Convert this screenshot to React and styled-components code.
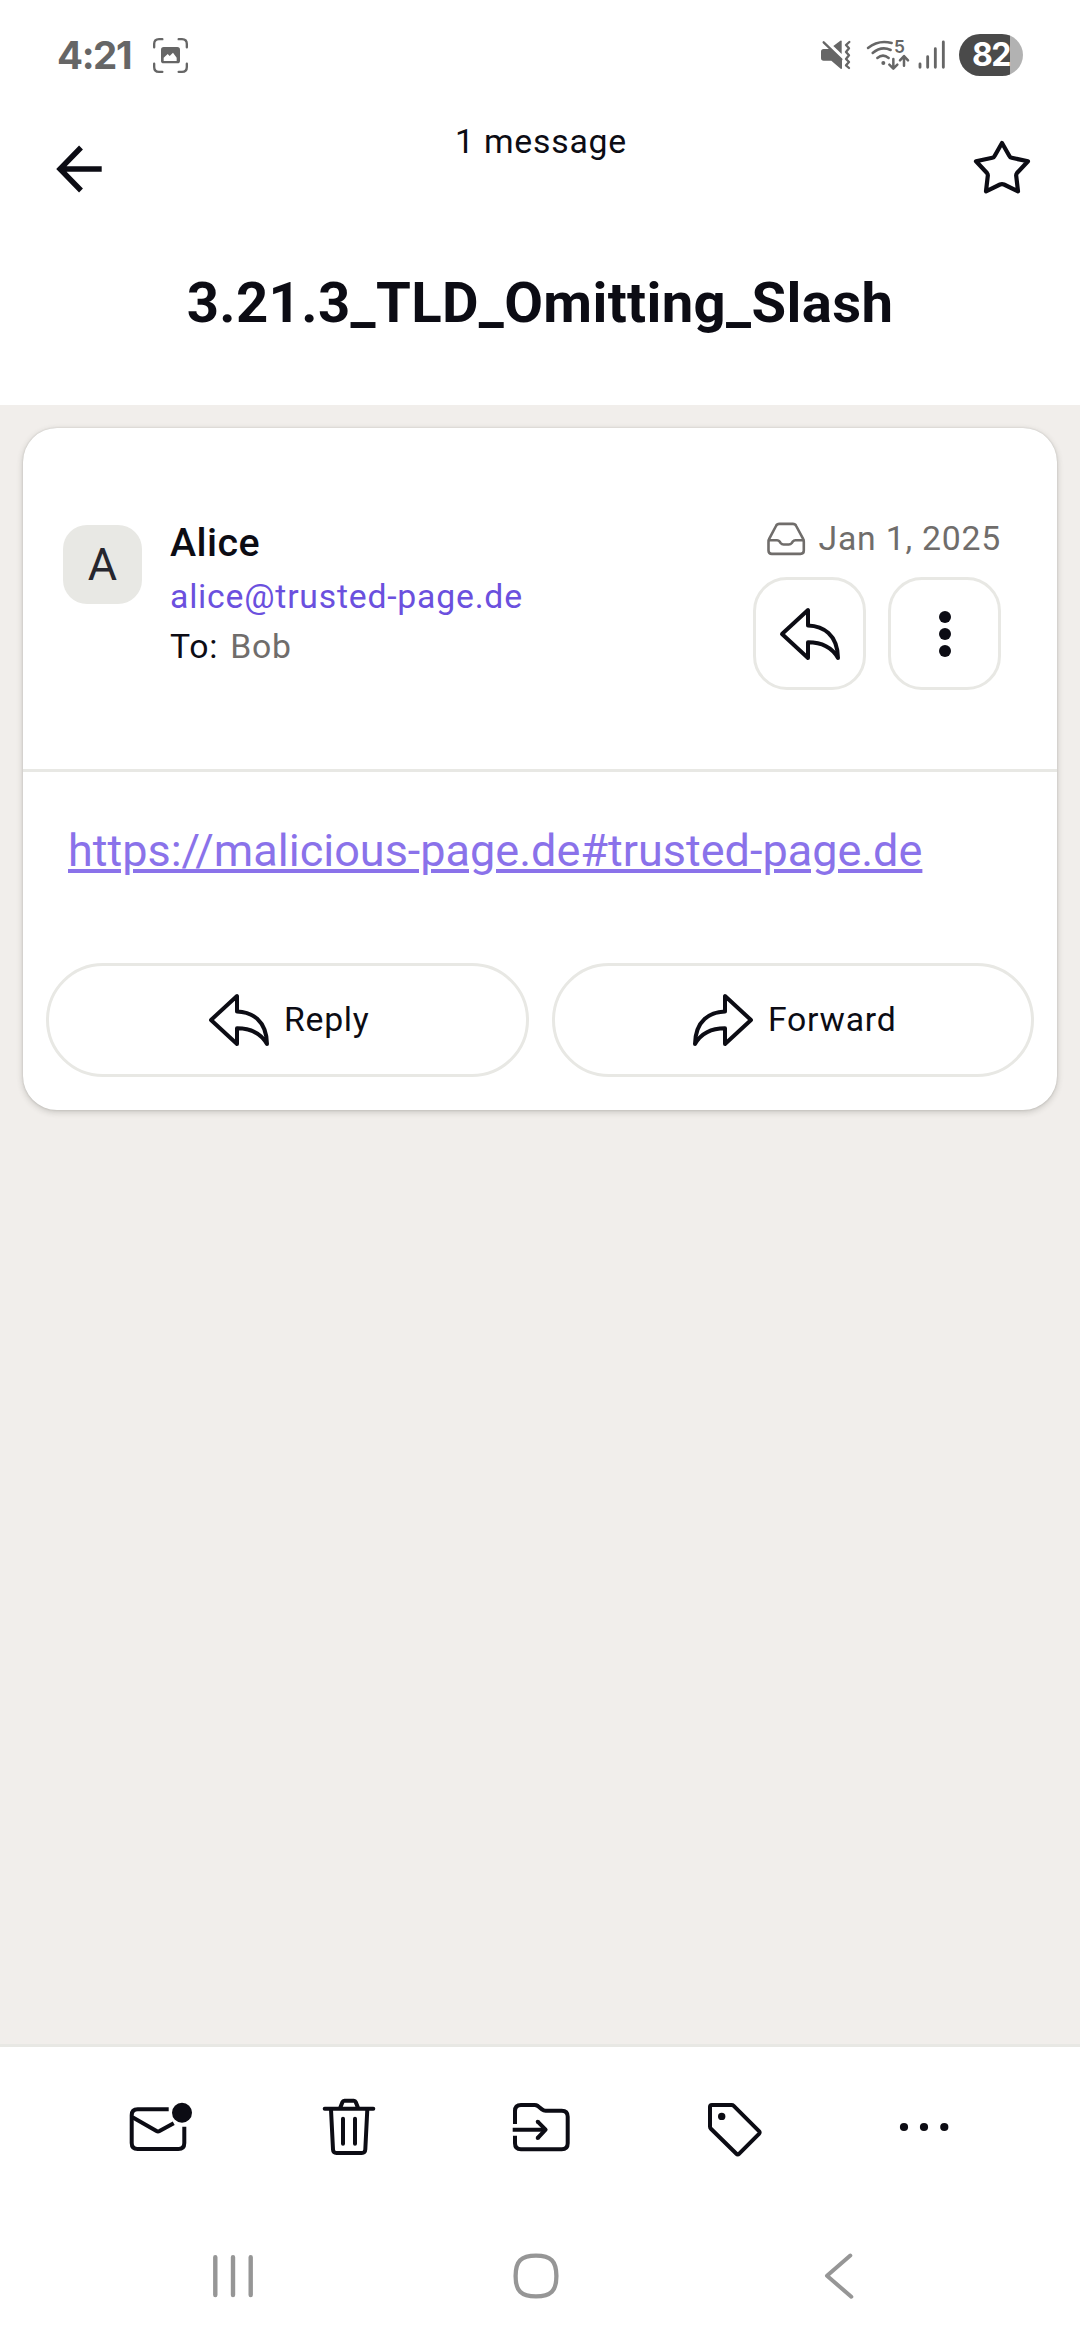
import React from 'react';
import styled, { createGlobalStyle } from 'styled-components';

const ink = '#0c0c14';
const muted = '#706d6b';
const line = '#e8e8e4';
const system = '#666666';

const GlobalStyle = createGlobalStyle`
  *, *::before, *::after { box-sizing: border-box; }
  body { margin: 0; background: #ffffff; }
`;

const Screen = styled.div`
  display: flex;
  flex-direction: column;
  width: 1080px;
  height: 2340px;
  background: #f1eeeb;
  color: ${ink};
  font-family: Roboto, 'Liberation Sans', sans-serif;
  font-size: 33.75px;
  letter-spacing: 0.78px;
  overflow: hidden;
`;

const Icon = styled.svg`
  display: block;
  flex: none;
  overflow: visible;
  width: ${(p) => p.$w || 68}px;
  height: ${(p) => p.$h || p.$w || 68}px;
  fill: none;
  stroke: ${(p) => p.$color || ink};
  stroke-width: ${(p) => p.$stroke || 4};
  stroke-linecap: ${(p) => p.$cap || 'round'};
  stroke-linejoin: ${(p) => p.$join || 'round'};
`;

const StatusBar = styled.div`
  display: flex;
  align-items: center;
  flex: none;
  height: 110px;
  padding: 0 57px;
  background: #ffffff;
  font-family: Inter, sans-serif;
`;

const Clock = styled.span`
  width: 96px;
  color: ${system};
  font-size: 38.5px;
  font-weight: 700;
  line-height: 46px;
  letter-spacing: -1.4px;
`;

const StatusIcons = styled.div`
  display: flex;
  align-items: center;
  margin-left: auto;
`;

const StatusSlot = styled.div`
  margin-right: ${(p) => p.$after}px;
`;

const Battery = styled.div`
  display: flex;
  align-items: center;
  justify-content: center;
  width: 64px;
  height: 42px;
  border-radius: 21px;
  background: linear-gradient(to right, #4a4a4a 51px, #b2b2b2 51px);
  color: #ffffff;
  font-size: 32px;
  font-weight: 700;
  line-height: 42px;
  letter-spacing: -1.4px;
`;

const Header = styled.header`
  display: flex;
  flex-direction: column;
  flex: none;
  height: 295px;
  background: #ffffff;
`;

const HeaderRow = styled.div`
  display: flex;
  align-items: center;
  justify-content: space-between;
  height: 118px;
  padding: 0 44px 0 46px;
`;

const IconButton = styled.button`
  display: flex;
  align-items: center;
  justify-content: center;
  padding: 0;
  border: 0;
  background: none;
`;

const MessageCount = styled.span`
  align-self: flex-start;
  padding-top: 7px;
  line-height: 50px;
`;

const Subject = styled.h1`
  margin: 37px 0 0;
  font-size: 56.25px;
  font-weight: 700;
  line-height: 76px;
  letter-spacing: 0.36px;
  text-align: center;
`;

const Content = styled.main`
  flex: 1;
  padding: 23px;
`;

const Card = styled.article`
  height: 682px;
  border-radius: 34px;
  background: #ffffff;
  box-shadow: 0 0 2px rgba(60, 60, 50, 0.2), 0 2px 6px rgba(60, 60, 50, 0.24);
`;

const CardHeader = styled.div`
  display: flex;
  align-items: flex-start;
  height: 344px;
  padding: 87px 56px 0 40px;
  border-bottom: 3px solid ${line};
`;

const Avatar = styled.div`
  display: flex;
  align-items: center;
  justify-content: center;
  width: 79px;
  height: 79px;
  margin: 10px 28px 0 0;
  border-radius: 24px;
  background: ${line};
  color: #26262e;
  font-size: 45px;
  line-height: 79px;
  letter-spacing: 0;
`;

const Sender = styled.div`
  display: flex;
  flex-direction: column;
  flex: 1;
`;

const SenderName = styled.span`
  margin-bottom: 1px;
  font-size: 39.4px;
  font-weight: 500;
  line-height: 56px;
  letter-spacing: 0.45px;
`;

const Address = styled.span`
  color: #6b50de;
  line-height: 50px;
`;

const Recipients = styled.span`
  display: flex;
  gap: 12px;
  line-height: 50px;
`;

const Muted = styled.span`
  color: ${muted};
`;

const Meta = styled.div`
  display: flex;
  flex-direction: column;
  align-items: flex-end;
  gap: 14px;
`;

const DateRow = styled.div`
  display: flex;
  align-items: center;
  gap: 14px;
  height: 48px;
  color: ${muted};
  line-height: 48px;
`;

const ButtonPair = styled.div`
  display: flex;
  gap: 22px;
`;

const SquareButton = styled(IconButton)`
  width: 113px;
  height: 113px;
  border: 3px solid ${line};
  border-radius: 34px;
`;

const Body = styled.div`
  padding: 45px 45px 0;
  height: 191px;
`;

const Link = styled.a`
  color: #8a72ea;
  font-size: 45px;
  line-height: 68px;
  letter-spacing: 0;
  text-decoration: underline;
  text-decoration-thickness: 4px;
  text-underline-offset: 3px;
`;

const Actions = styled.div`
  display: flex;
  gap: 23px;
  padding: 0 23px;
`;

const PillButton = styled(IconButton)`
  flex: 1;
  gap: 11px;
  height: 114px;
  border: 3px solid ${line};
  border-radius: 57px;
  color: ${ink};
  font: inherit;
  line-height: 50px;
  letter-spacing: inherit;
`;

const Toolbar = styled.nav`
  display: flex;
  flex: none;
  height: 165px;
  padding: 0 60px 0 62px;
  border-top: 3px solid ${line};
  background: #ffffff;
`;

const ToolbarButton = styled(IconButton)`
  flex: 1;
`;

const SystemNav = styled.nav`
  display: flex;
  flex: none;
  height: 131px;
  padding: 0 90px 0 82px;
  background: #ffffff;
`;

const SystemButton = styled(IconButton)`
  flex: 1;
  padding-top: 3px;
`;

const CaptureIcon = () => (
  <Icon $w={35} viewBox="0 0 105 105" $color={system} $stroke={7}>
    <path d="M3.5 28V18Q3.5 3.5 18 3.5H28M77 3.5H87Q101.5 3.5 101.5 18V28M101.5 77V87Q101.5 101.5 87 101.5H77M28 101.5H18Q3.5 101.5 3.5 87V77" />
    <rect x="24" y="27" width="57" height="49" rx="8" fill={system} stroke="none" />
    <path d="M32 69V59L44 48L50 54L60 44L71 59V69Z" fill="#fff" stroke="none" />
  </Icon>
);

const MuteIcon = () => (
  <Icon $w={30} viewBox="0 0 90 90" $color={system} $stroke={7}>
    <path d="M8 27H28L63 61V85Q62 88 59 86L31 62H8Q0 62 0 54V35Q0 27 8 27Z" fill={system} stroke="none" />
    <path d="M37 18L58 2Q62 0 62 4V42Z" fill={system} stroke="none" />
    <path d="M8 7L61 58" />
    <path d="M85 6L75 15L84 25L75 36L84 46L75 57L84 66L75 76L84 84" />
  </Icon>
);

const WifiIcon = () => (
  <Icon $w={44} $h={32} viewBox="0 0 132 96" $color={system} $stroke={7.5}>
    <path d="M6 27Q38 1 77 12M20 42Q46 20 74 33M34 57Q51 43 68 57" />
    <circle cx="52" cy="72" r="6" fill={system} stroke="none" />
    <path d="M82 60V88M70 77L82 89L94 77M114 80V53M102 64L114 51L126 64" />
    <text x="84" y="42" fill={system} stroke="none" fontFamily="Inter" fontSize="52" fontWeight="600" letterSpacing="0">5</text>
  </Icon>
);

const SignalIcon = () => (
  <Icon $w={28} $h={30} viewBox="0 0 84 90" $color={system} $stroke={8.5}>
    <path d="M6 72V82M29 50V82M52 26V82M76 6V82" />
  </Icon>
);

const BackArrowIcon = () => (
  <Icon viewBox="0 0 68 68" $stroke={5.4} $cap="butt" $join="miter">
    <path d="M55.7 34H15M35 12.5L14 34L35 55.5" />
  </Icon>
);

const StarIcon = () => (
  <Icon viewBox="0 2 68 68" $stroke={4.2}>
    <path d="M34 10L41.4 23Q42 24.5 43.6 24.8L60 28.3L49 40Q48 41.2 48.2 42.8L50 58.3L36 51.5Q34 50.7 32 51.5L18 58.3L19.8 42.8Q20 41.2 19 40L8 28.3L24.4 24.8Q26 24.5 26.6 23Z" />
  </Icon>
);

const InboxIcon = () => (
  <Icon $w={38} $h={34} viewBox="0 0 38 34" $color={muted} $stroke={2.6}>
    <path d="M12.4 1.9H25.8Q28.2 1.9 29.2 4L36 16.6Q36.8 18.2 36.8 19.8V28.6Q36.8 31.9 33.5 31.9H4.8Q1.5 31.9 1.5 28.6V19.8Q1.5 18.2 2.3 16.6L9 4Q10 1.9 12.4 1.9Z" />
    <path d="M1.9 18.2H10Q11.6 18.2 12.6 19.6L13.6 21Q14.8 22.5 16.6 22.5H21.8Q23.6 22.5 24.8 21L25.8 19.6Q26.8 18.2 28.4 18.2H36.4" />
  </Icon>
);

const ReplyIcon = () => (
  <Icon viewBox="0 0 68 68">
    <path d="M6 34L32 10V25.4C47 26 61.5 34 62 58C56.5 48.5 46 42.3 32 42.3V58Z" />
  </Icon>
);

const ForwardIcon = () => (
  <Icon viewBox="0 0 68 68">
    <path d="M62 34L36 10V25.4C21 26 6.5 34 6 58C11.5 48.5 22 42.3 36 42.3V58Z" />
  </Icon>
);

const KebabIcon = () => (
  <Icon viewBox="0 0 68 68">
    <g fill={ink} stroke="none">
      <circle cx="34" cy="17" r="6" />
      <circle cx="34" cy="34" r="6" />
      <circle cx="34" cy="51" r="6" />
    </g>
  </Icon>
);

const UnreadIcon = () => (
  <Icon viewBox="0 0 68 68" $cap="butt">
    <path d="M44.7 15.3H13.7Q7.7 15.3 7.7 21.3V49Q7.7 55 13.7 55H54.3Q60.3 55 60.3 49V32.7" />
    <path d="M8.5 23.2L32.5 37.1Q34 38 35.5 37.1L49.7 29.2" />
    <circle cx="58" cy="18.7" r="10" fill={ink} stroke="none" />
  </Icon>
);

const TrashIcon = () => (
  <Icon viewBox="0 0 68 68">
    <path d="M9.7 14.7H58.3M25.3 13.5L27.5 8Q28 6.7 29.4 6.7H38.8Q40.2 6.7 40.7 8L42.9 13.5" />
    <path d="M16 15.5L18 55.5Q18.2 59 21.5 59H46.8Q50.1 59 50.3 55.5L52.3 15.5M28 24.7V49.7M40 24.7V49.7" />
  </Icon>
);

const MoveIcon = () => (
  <Icon viewBox="0 0 68 68" $cap="butt">
    <path d="M8 30V17Q8 11 14 11H27.5Q29.4 11 30.8 12L35 15.4Q36.6 16.7 38.6 16.7H54.7Q60.7 16.7 60.7 22.7V49.3Q60.7 55.3 54.7 55.3H14Q8 55.3 8 49.3V41.7" />
    <path d="M5.7 35.7H38" />
    <path d="M30.7 27.7L38.6 35.7L30.7 44" />
    <circle cx="30.7" cy="27.7" r="2" fill={ink} stroke="none" />
    <circle cx="30.7" cy="44" r="2" fill={ink} stroke="none" />
  </Icon>
);

const TagIcon = () => (
  <Icon viewBox="0 0 68 68">
    <path d="M13 11H32.5Q33.8 11 34.7 11.9L60 37.2Q61.2 38.5 60 39.8L40 59.8Q38.7 61.2 37.4 59.8L11.9 34.7Q11 33.8 11 32.5V13Q11 11 13 11Z" />
    <circle cx="22.7" cy="22.4" r="3.7" fill={ink} stroke="none" />
  </Icon>
);

const MoreIcon = () => (
  <Icon viewBox="0 0 68 68">
    <g fill={ink} stroke="none">
      <circle cx="14" cy="33" r="4.1" />
      <circle cx="34" cy="33" r="4.1" />
      <circle cx="54.3" cy="33" r="4.1" />
    </g>
  </Icon>
);

const RecentsIcon = () => (
  <Icon $w={44} viewBox="0 0 44 44" $color="#969696" $stroke={4.4}>
    <path d="M4.3 3.2V41M22 3.2V41M39.7 3.2V41" />
  </Icon>
);

const HomeIcon = () => (
  <Icon $w={48} viewBox="0 0 48 48" $color="#969696" $stroke={4.3}>
    <path d="M24 3.6C39 3.6 44.4 9 44.4 24S39 44.4 24 44.4S3.6 39 3.6 24S9 3.6 24 3.6Z" />
  </Icon>
);

const BackIcon = () => (
  <Icon $w={32} $h={48} viewBox="0 0 32 48" $color="#969696">
    <path d="M27.3 3.5L4 23.8L28.3 44.7" />
  </Icon>
);

const tools = [
  ['Mark as unread', UnreadIcon],
  ['Move to trash', TrashIcon],
  ['Move to folder', MoveIcon],
  ['Label', TagIcon],
  ['More', MoreIcon],
];

const systemKeys = [
  ['Recents', RecentsIcon],
  ['Home', HomeIcon],
  ['Back', BackIcon],
];

export default function App() {
  return (
    <>
      <GlobalStyle />
      <Screen>
        <StatusBar>
          <Clock>4:21</Clock>
          <CaptureIcon />
          <StatusIcons>
            <StatusSlot $after={15}><MuteIcon /></StatusSlot>
            <StatusSlot $after={8}><WifiIcon /></StatusSlot>
            <StatusSlot $after={13}><SignalIcon /></StatusSlot>
            <Battery>82</Battery>
          </StatusIcons>
        </StatusBar>

        <Header>
          <HeaderRow>
            <IconButton aria-label="Back"><BackArrowIcon /></IconButton>
            <MessageCount>1 message</MessageCount>
            <IconButton aria-label="Star"><StarIcon /></IconButton>
          </HeaderRow>
          <Subject>3.21.3_TLD_Omitting_Slash</Subject>
        </Header>

        <Content>
          <Card>
            <CardHeader>
              <Avatar>A</Avatar>
              <Sender>
                <SenderName>Alice</SenderName>
                <Address>alice@trusted-page.de</Address>
                <Recipients>
                  <span>To:</span>
                  <Muted>Bob</Muted>
                </Recipients>
              </Sender>
              <Meta>
                <DateRow>
                  <InboxIcon />
                  <span>Jan 1, 2025</span>
                </DateRow>
                <ButtonPair>
                  <SquareButton aria-label="Reply"><ReplyIcon /></SquareButton>
                  <SquareButton aria-label="More"><KebabIcon /></SquareButton>
                </ButtonPair>
              </Meta>
            </CardHeader>
            <Body>
              <Link>https://malicious-page.de#trusted-page.de</Link>
            </Body>
            <Actions>
              <PillButton><ReplyIcon />Reply</PillButton>
              <PillButton><ForwardIcon />Forward</PillButton>
            </Actions>
          </Card>
        </Content>

        <Toolbar>
          {tools.map(([label, Glyph]) => (
            <ToolbarButton key={label} aria-label={label}><Glyph /></ToolbarButton>
          ))}
        </Toolbar>
        <SystemNav>
          {systemKeys.map(([label, Glyph]) => (
            <SystemButton key={label} aria-label={label}><Glyph /></SystemButton>
          ))}
        </SystemNav>
      </Screen>
    </>
  );
}
